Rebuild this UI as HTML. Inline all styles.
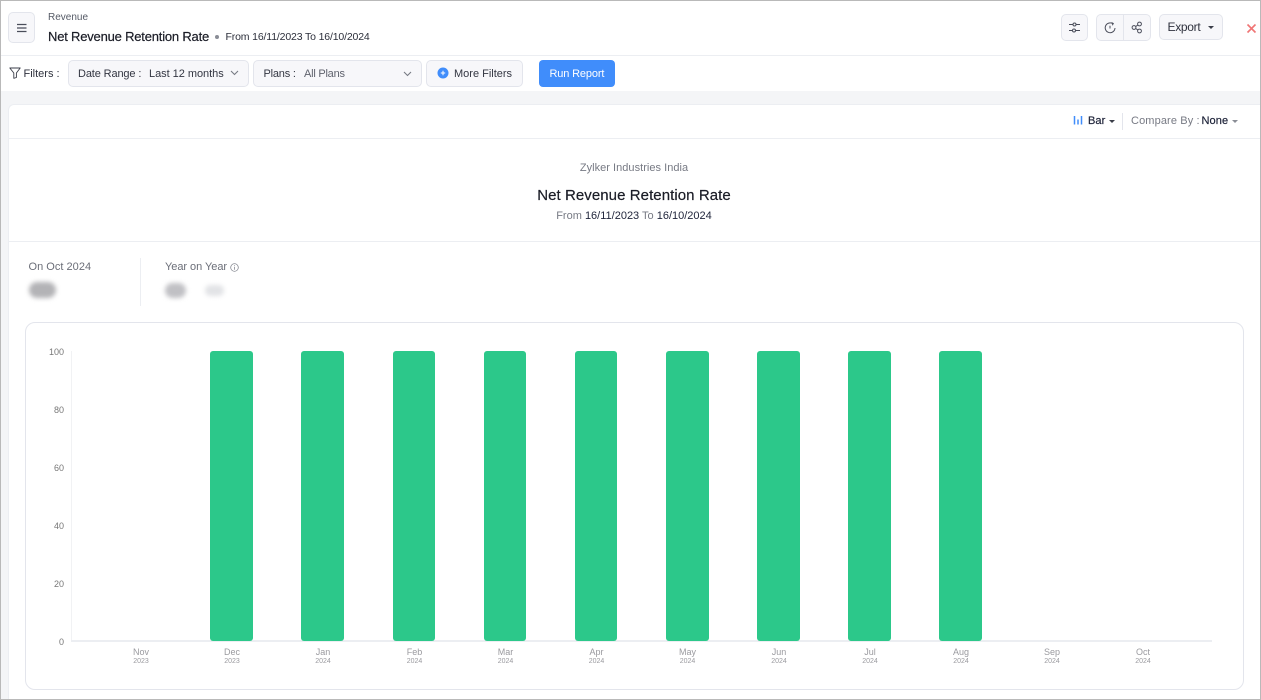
<!DOCTYPE html>
<html>
<head>
<meta charset="utf-8">
<style>
html,body{margin:0;padding:0;width:1261px;height:700px;overflow:hidden;background:#fff;}
body{position:relative;font-family:"Liberation Sans",sans-serif;color:#21263c;}
.a{position:absolute;box-sizing:border-box;}
.t{position:absolute;white-space:nowrap;line-height:1;}
.btn{position:absolute;box-sizing:border-box;background:#f7f7fa;border:1px solid #e3e5ec;border-radius:5px;}
.bar{position:absolute;top:351px;width:42.500px;height:290px;background:#2cc88a;border-radius:3px;}
.y{position:absolute;width:30px;left:34px;text-align:right;font-size:9px;line-height:1;color:#777;}
.x{position:absolute;width:60px;text-align:center;top:647.500px;font-size:9px;line-height:9px;color:#9a9a9f;}
.x small{display:block;font-size:7px;line-height:8px;margin-top:1px;color:#9a9a9f;}
</style>
</head>
<body>
<!-- top bar -->
<div class="a" style="left:0;top:55px;width:1261px;height:1px;background:#eceef2"></div>
<div class="a" style="left:0;top:91px;width:1261px;height:609px;background:#f4f5f7"></div>

<div class="btn" style="left:8px;top:12px;width:27px;height:31px;"></div>
<svg class="a" style="left:16px;top:23px" width="12" height="10" viewBox="0 0 12 10"><path d="M1 1.500H10.500M1 5H10.500M1 8.500H10.500" stroke="#4a4d5a" stroke-width="1.300" fill="none"/></svg>
<div class="t" style="left:48px;top:12.500px;font-size:10px;color:#555a66;">Revenue</div>
<div class="t" style="left:48px;top:29.500px;font-size:13px;color:#1a1c26;letter-spacing:-.2px;-webkit-text-stroke:.2px #1a1c26;">Net Revenue Retention Rate</div>
<div class="a" style="left:215px;top:35px;width:4px;height:4px;border-radius:50%;background:#8a8d96"></div>
<div class="t" style="left:225.500px;top:32px;font-size:10.500px;color:#2b2e3a;letter-spacing:-.15px;">From 16/11/2023 To 16/10/2024</div>

<!-- right actions -->
<div class="btn" style="left:1061px;top:14px;width:27px;height:27px;"></div>
<svg class="a" style="left:1068px;top:21px" width="13" height="13" viewBox="0 0 13 13" fill="none" stroke="#4a4d5a" stroke-width="1"><path d="M1 3.500H5M8 3.500H12M1 9.500H4.500M7.500 9.500H12"/><circle cx="6.500" cy="3.500" r="1.500"/><circle cx="6" cy="9.500" r="1.500"/></svg>
<div class="btn" style="left:1096px;top:14px;width:55px;height:27px;"></div>
<div class="a" style="left:1123px;top:15px;width:1px;height:25px;background:#e3e5ec"></div>
<svg class="a" style="left:1104px;top:22px" width="12" height="12" viewBox="0 0 12 12" fill="none" stroke="#4a4d5a" stroke-width="1"><path d="M8.800 1.700A4.900 4.900 0 1 0 11 6"/><path d="M7.500 .5L9.300 1.500L8.300 3.300"/><path d="M6 3.800V6.500"/></svg>
<svg class="a" style="left:1131px;top:21px" width="13" height="13" viewBox="0 0 13 13" fill="none" stroke="#4a4d5a" stroke-width="1"><circle cx="3" cy="6.500" r="1.900"/><circle cx="8.500" cy="3" r="1.900"/><circle cx="8.500" cy="10" r="1.900"/><path d="M4.700 5.500L6.800 4.100M4.700 7.500L6.800 8.900"/></svg>
<div class="btn" style="left:1159px;top:14px;width:64px;height:26px;"></div>
<div class="t" style="left:1167.500px;top:21px;font-size:12px;color:#2f323e;letter-spacing:-.3px;">Export</div>
<div class="a" style="left:1208px;top:26px;width:0;height:0;border-left:3.500px solid transparent;border-right:3.500px solid transparent;border-top:3.500px solid #3a3d48"></div>
<svg class="a" style="left:1246px;top:22.500px" width="11" height="11" viewBox="0 0 11 11"><path d="M1.500 1.500L9.500 9.500M9.500 1.500L1.500 9.500" stroke="#f07575" stroke-width="1.600" fill="none"/></svg>

<!-- filter row -->
<svg class="a" style="left:9px;top:67px" width="12" height="12" viewBox="0 0 12 12" fill="none" stroke="#3a3d48" stroke-width=".9"><path d="M.8 1H11.200L7.400 6V10.500L4.800 11.300L4.800 6Z" stroke-linejoin="round"/></svg>
<div class="t" style="left:23.500px;top:68.500px;font-size:11px;color:#2f323e;">Filters :</div>
<div class="btn" style="left:67.500px;top:60px;width:181px;height:27px;"></div>
<div class="t" style="left:78px;top:68.500px;font-size:11px;color:#333642;letter-spacing:-.13px;">Date Range :</div>
<div class="t" style="left:149px;top:68.500px;font-size:11px;color:#333642;letter-spacing:-.04px;">Last 12 months</div>
<svg class="a" style="left:230px;top:70px" width="9" height="6" viewBox="0 0 9 6"><path d="M1 1L4.500 4.500L8 1" stroke="#777a84" stroke-width="1.100" fill="none"/></svg>
<div class="btn" style="left:253px;top:60px;width:169px;height:27px;"></div>
<div class="t" style="left:263.500px;top:68.500px;font-size:11px;color:#333642;letter-spacing:-.2px;">Plans :</div>
<div class="t" style="left:304px;top:68.500px;font-size:11px;color:#5f626d;letter-spacing:-.23px;">All Plans</div>
<svg class="a" style="left:403px;top:71px" width="9" height="6" viewBox="0 0 9 6"><path d="M1 1L4.500 4.500L8 1" stroke="#777a84" stroke-width="1.100" fill="none"/></svg>
<div class="btn" style="left:426px;top:60px;width:97px;height:27px;"></div>
<svg class="a" style="left:437px;top:67px" width="12" height="12" viewBox="0 0 12 12"><circle cx="6" cy="6" r="5.500" fill="#408dfb"/><path d="M3.800 6H8.200M6 3.800V8.200" stroke="#fff" stroke-width="1"/></svg>
<div class="t" style="left:454px;top:68.500px;font-size:11px;color:#333642;">More Filters</div>
<div class="a" style="left:539px;top:60px;width:76px;height:27px;background:#408dfb;border-radius:4px;"></div>
<div class="t" style="left:549.500px;top:68.500px;font-size:11px;color:#fff;letter-spacing:-.15px;">Run Report</div>

<!-- main card -->
<div class="a" style="left:8px;top:104px;width:1253px;height:596px;background:#fff;border-radius:6px 0 0 0;border-left:1px solid #eceef2;border-top:1px solid #eceef2;"></div>
<div class="a" style="left:9px;top:138px;width:1252px;height:1px;background:#eceef2"></div>
<svg class="a" style="left:1073px;top:115px" width="11" height="10" viewBox="0 0 11 10"><path d="M1.500 1V9.500M5 4.500V9.500M8.500 1V9.500" stroke="#408dfb" stroke-width="1.500" fill="none"/></svg>
<div class="t" style="left:1088px;top:116px;font-size:11px;color:#21263c;letter-spacing:.1px;-webkit-text-stroke:.2px #21263c;">Bar</div>
<div class="a" style="left:1109px;top:120px;width:0;height:0;border-left:3px solid transparent;border-right:3px solid transparent;border-top:3px solid #3a3d48"></div>
<div class="a" style="left:1122px;top:113px;width:1px;height:17px;background:#e3e5ec"></div>
<div class="t" style="left:1131px;top:116px;font-size:11px;color:#777a84;letter-spacing:.12px;">Compare By :</div>
<div class="t" style="left:1201.500px;top:116px;font-size:11px;color:#21263c;letter-spacing:.1px;-webkit-text-stroke:.2px #21263c;">None</div>
<div class="a" style="left:1232px;top:120px;width:0;height:0;border-left:3px solid transparent;border-right:3px solid transparent;border-top:3px solid #8a8d96"></div>

<div class="t" style="left:0;width:1268px;text-align:center;top:162.500px;font-size:11px;color:#777a84;letter-spacing:.03px;">Zylker Industries India</div>
<div class="t" style="left:0;width:1268px;text-align:center;top:188px;font-size:15px;color:#1a1c26;letter-spacing:.07px;-webkit-text-stroke:.2px #1a1c26;">Net Revenue Retention Rate</div>
<div class="t" style="left:0;width:1268px;text-align:center;top:210.500px;font-size:11px;color:#777a84;">From <span style="color:#21263c">16/11/2023</span> To <span style="color:#21263c">16/10/2024</span></div>
<div class="a" style="left:9px;top:241px;width:1252px;height:1px;background:#eceef2"></div>

<div class="t" style="left:28.500px;top:262px;font-size:11px;color:#6b6e78;letter-spacing:.02px;">On Oct 2024</div>
<div class="a" style="left:29px;top:282px;width:27px;height:16px;border-radius:8px;background:#b3b3b6;filter:blur(2.500px);"></div>
<div class="a" style="left:140px;top:258px;width:1px;height:48px;background:#eceef2"></div>
<div class="t" style="left:165px;top:262px;font-size:11px;color:#6b6e78;letter-spacing:-.05px;">Year on Year</div>
<svg class="a" style="left:230px;top:262.500px" width="9" height="9" viewBox="0 0 9 9" fill="none" stroke="#777a84" stroke-width=".7"><circle cx="4.500" cy="4.500" r="3.800"/><path d="M4.500 4V6.800M4.500 2.300V3.200"/></svg>
<div class="a" style="left:165px;top:283px;width:21px;height:15px;border-radius:8px;background:#c0c0c4;filter:blur(2.500px);"></div>
<div class="a" style="left:205px;top:285px;width:19px;height:11px;border-radius:6px;background:#e2e3e6;filter:blur(2.500px);"></div>

<!-- chart -->
<div class="a" style="left:24.500px;top:322px;width:1219px;height:368px;border:1px solid #e3e5ec;border-radius:10px;"></div>
<div class="a" style="left:71px;top:351px;width:1px;height:290px;background:#f1f2f4"></div>
<div class="a" style="left:71px;top:640px;width:1141px;height:1.500px;background:#eceef2"></div>
<div class="y" style="top:348px">100</div>
<div class="y" style="top:406px">80</div>
<div class="y" style="top:464px">60</div>
<div class="y" style="top:521.500px">40</div>
<div class="y" style="top:579.500px">20</div>
<div class="y" style="top:637.500px">0</div>

<div class="bar" style="left:210px"></div>
<div class="bar" style="left:301px"></div>
<div class="bar" style="left:392.500px"></div>
<div class="bar" style="left:483.500px"></div>
<div class="bar" style="left:574.500px"></div>
<div class="bar" style="left:666px"></div>
<div class="bar" style="left:757px"></div>
<div class="bar" style="left:848px"></div>
<div class="bar" style="left:939px"></div>

<div class="x" style="left:111px">Nov<small>2023</small></div>
<div class="x" style="left:202px">Dec<small>2023</small></div>
<div class="x" style="left:293px">Jan<small>2024</small></div>
<div class="x" style="left:384.500px">Feb<small>2024</small></div>
<div class="x" style="left:475.500px">Mar<small>2024</small></div>
<div class="x" style="left:566.500px">Apr<small>2024</small></div>
<div class="x" style="left:657.500px">May<small>2024</small></div>
<div class="x" style="left:749px">Jun<small>2024</small></div>
<div class="x" style="left:840px">Jul<small>2024</small></div>
<div class="x" style="left:931px">Aug<small>2024</small></div>
<div class="x" style="left:1022px">Sep<small>2024</small></div>
<div class="x" style="left:1113px">Oct<small>2024</small></div>

<!-- window frame -->
<div class="a" style="left:0;top:0;width:1261px;height:700px;border:1px solid #b9b9b9;border-left-width:1.500px;pointer-events:none;"></div>
</body>
</html>
